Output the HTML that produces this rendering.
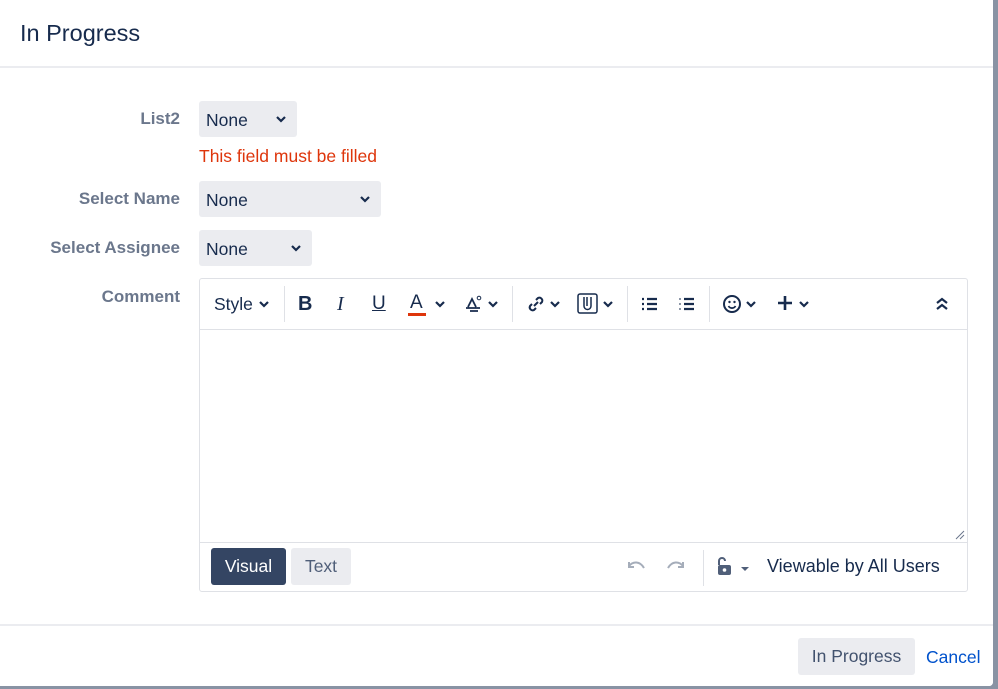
<!DOCTYPE html>
<html><head><style>
*{box-sizing:border-box;margin:0;padding:0}
body{width:998px;height:689px;background:#8993a4;font-family:"Liberation Sans",sans-serif;color:#172b4d;position:relative;overflow:hidden}
.dlg{position:absolute;left:0;top:0;width:993px;height:686px;background:#fff;border-radius:0 0 4px 0;overflow:hidden}
.hd{height:68px;border-bottom:2px solid #ebecf0;padding:20px 20px;font-size:23.5px}
.lbl{position:absolute;right:813px;font-size:17px;color:#6b778c;font-weight:bold;text-align:right}
.sel{position:absolute;left:199px;height:36px;background:#ebecf0;border-radius:3px;font-size:17.5px;padding:9px 7px}
.sel svg{position:absolute;right:10px;top:14px}
.err{position:absolute;left:199px;top:146px;color:#de350b;font-size:17.5px}
.ed{position:absolute;left:199px;top:278px;width:769px;height:314px;border:1px solid #dfe1e6;border-radius:3px}
.tb{height:51px;border-bottom:1px solid #dfe1e6;position:relative}
.tb>*{position:absolute}
.sep{width:1px;height:36px;top:7px;background:#dfe1e6}
.bt{position:absolute;top:263px;left:0;right:0;height:50px;border-top:1px solid #dfe1e6}
.ft{position:absolute;top:624px;left:0;right:0;height:62px;border-top:2px solid #ebecf0;background:#fff}
</style></head><body>
<div class="dlg">
<div class="hd">In Progress</div>
<div class="lbl" style="top:109px">List2</div>
<div class="sel" style="top:101px;width:98px">None<svg width="12" height="8"><path d="M2 2l4 4 4-4" stroke="#172b4d" stroke-width="2.2" fill="none"/></svg></div>
<div class="err">This field must be filled</div>
<div class="lbl" style="top:189px">Select Name</div>
<div class="sel" style="top:181px;width:182px">None<svg width="12" height="8"><path d="M2 2l4 4 4-4" stroke="#172b4d" stroke-width="2.2" fill="none"/></svg></div>
<div class="lbl" style="top:238px">Select Assignee</div>
<div class="sel" style="top:230px;width:113px">None<svg width="12" height="8"><path d="M2 2l4 4 4-4" stroke="#172b4d" stroke-width="2.2" fill="none"/></svg></div>
<div class="lbl" style="top:287px">Comment</div>
<div class="ed">
<div class="tb">
<div style="left:14px;top:15px;font-size:17.5px">Style</div>
<svg style="left:58px;top:21px" width="12" height="8"><path d="M2 2l4 4 4-4" stroke="#172b4d" stroke-width="2.2" fill="none"/></svg>
<div class="sep" style="left:84px"></div>
<div style="left:98px;top:14px;font-size:20px;font-weight:bold">B</div>
<div style="left:137px;top:14px;font-size:20px;font-style:italic;font-family:'Liberation Serif',serif">I</div>
<div style="left:172px;top:14px;font-size:19px;text-decoration:underline">U</div>
<div style="left:210px;top:13px;font-size:19px">A</div>
<div style="left:208px;top:34px;width:18px;height:3px;background:#de350b"></div>
<svg style="left:234px;top:21px" width="12" height="8"><path d="M2 2l4 4 4-4" stroke="#172b4d" stroke-width="2.2" fill="none"/></svg>
<svg style="left:264px;top:15px" width="20" height="20"><path d="M4 13l4-8 4 8M2 14h14M6 17h8" stroke="#172b4d" stroke-width="1.8" fill="none"/><circle cx="15" cy="4" r="1.8" stroke="#172b4d" fill="none"/></svg>
<svg style="left:287px;top:21px" width="12" height="8"><path d="M2 2l4 4 4-4" stroke="#172b4d" stroke-width="2.2" fill="none"/></svg>
<div class="sep" style="left:312px"></div>
<svg style="left:326px;top:15px" width="20" height="20"><path d="M8 12l4-4M6 10l-2 2a3 3 0 004 4l2-2M14 10l2-2a3 3 0 00-4-4l-2 2" stroke="#172b4d" stroke-width="2" fill="none"/></svg>
<svg style="left:349px;top:21px" width="12" height="8"><path d="M2 2l4 4 4-4" stroke="#172b4d" stroke-width="2.2" fill="none"/></svg>
<svg style="left:377px;top:14px" width="22" height="22"><rect x="1" y="1" width="19" height="19" rx="2" stroke="#172b4d" stroke-width="1.5" fill="none"/><path d="M7 4v9a3.5 3.5 0 007 0V4M10 4v9" stroke="#172b4d" stroke-width="1.5" fill="none"/></svg>
<svg style="left:402px;top:21px" width="12" height="8"><path d="M2 2l4 4 4-4" stroke="#172b4d" stroke-width="2.2" fill="none"/></svg>
<div class="sep" style="left:427px"></div>
<svg style="left:441px;top:17px" width="18" height="16"><path d="M1 3h2M1 8h2M1 13h2M6 3h10M6 8h10M6 13h10" stroke="#172b4d" stroke-width="2.2"/></svg>
<svg style="left:478px;top:17px" width="18" height="16"><path d="M6 3h10M6 8h10M6 13h10" stroke="#172b4d" stroke-width="2.2"/><path d="M1 3h2M1 8h2M1 13h2" stroke="#172b4d" stroke-width="1"/></svg>
<div class="sep" style="left:509px"></div>
<svg style="left:522px;top:15px" width="20" height="20"><circle cx="10" cy="10" r="8" stroke="#172b4d" stroke-width="2" fill="none"/><circle cx="7.5" cy="8" r="1.2" fill="#172b4d"/><circle cx="12.5" cy="8" r="1.2" fill="#172b4d"/><path d="M6.5 12a4 4 0 007 0" stroke="#172b4d" stroke-width="1.8" fill="none"/></svg>
<svg style="left:545px;top:21px" width="12" height="8"><path d="M2 2l4 4 4-4" stroke="#172b4d" stroke-width="2.2" fill="none"/></svg>
<svg style="left:576px;top:15px" width="18" height="18"><path d="M9 2v14M2 9h14" stroke="#172b4d" stroke-width="2.6"/></svg>
<svg style="left:598px;top:21px" width="12" height="8"><path d="M2 2l4 4 4-4" stroke="#172b4d" stroke-width="2.2" fill="none"/></svg>
<svg style="left:735px;top:17px" width="14" height="16"><path d="M2 7l5-4 5 4M2 13l5-4 5 4" stroke="#172b4d" stroke-width="2.2" fill="none"/></svg>
</div>
<svg style="position:absolute;right:2px;top:251px" width="10" height="10"><path d="M1 9l8-8M5 9l4-4" stroke="#6b778c" stroke-width="1"/></svg>
<div class="bt">
<div style="position:absolute;left:11px;top:5px;width:75px;height:37px;background:#344563;border-radius:3px;color:#fff;font-size:17.5px;text-align:center;line-height:37px">Visual</div>
<div style="position:absolute;left:91px;top:5px;width:60px;height:37px;background:#ebecf0;border-radius:3px;color:#505f79;font-size:17.5px;text-align:center;line-height:37px">Text</div>
<svg style="position:absolute;left:427px;top:17px" width="20" height="12"><path d="M2 6c4-5 11-5 15 2M2 2v5h5" stroke="#a5adba" stroke-width="2" fill="none"/></svg>
<svg style="position:absolute;left:465px;top:17px" width="20" height="12"><path d="M18 6c-4-5-11-5-15 2M18 2v5h-5" stroke="#a5adba" stroke-width="2" fill="none"/></svg>
<div style="position:absolute;left:503px;top:7px;width:1px;height:36px;background:#dfe1e6"></div>
<svg style="position:absolute;left:516px;top:13px" width="34" height="20"><path d="M3 9V5a3 3 0 016 0" stroke="#505f79" stroke-width="2" fill="none"/><rect x="2" y="9" width="13" height="10" rx="2" fill="#505f79"/><circle cx="8.5" cy="14" r="1.8" fill="#fff"/><path d="M25 11h8l-4 4z" fill="#505f79"/></svg>
<div style="position:absolute;left:567px;top:13px;font-size:18px">Viewable by All Users</div>
</div>
</div>
<div class="ft">
<div style="position:absolute;left:798px;top:12px;width:117px;height:37px;background:#ebecf0;border-radius:3px;font-size:17.5px;color:#42526e;text-align:center;line-height:37px">In Progress</div>
<div style="position:absolute;left:926px;top:21px;font-size:17.5px;color:#0052cc">Cancel</div>
</div>
</div>
</body></html>
